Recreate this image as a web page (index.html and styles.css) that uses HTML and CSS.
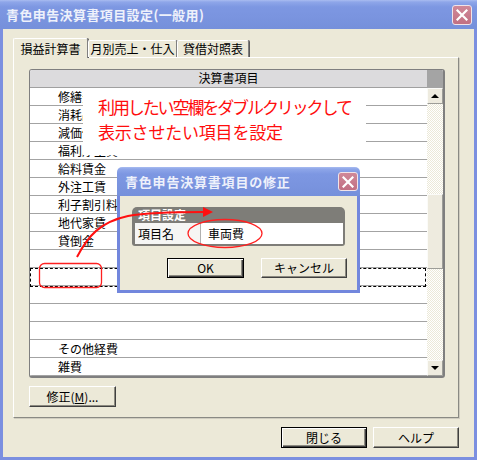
FILE: index.html
```html
<!DOCTYPE html>
<html lang="ja">
<head>
<meta charset="utf-8">
<title>青色申告決算書項目設定(一般用)</title>
<link rel="stylesheet" href="styles.css">
</head>
<body>
<div class="window">
  <div class="titlebar">
    <span class="title">青色申告決算書項目設定(一般用)</span>
    <span class="close-btn"><svg width="12" height="12" viewBox="0 0 12 12"><path d="M1.5 1.5 L10.5 10.5 M10.5 1.5 L1.5 10.5" stroke="#fff" stroke-width="2.2" stroke-linecap="square"/></svg></span>
  </div>
  <div class="client">
    <div class="tabs">
      <div class="tab active tab-pl">損益計算書</div>
      <div class="tab tab-month">月別売上・仕入</div>
      <div class="tab tab-bs">貸借対照表</div>
    </div>
    <div class="panel">
      <div class="list">
        <div class="list-main">
          <div class="list-header">決算書項目</div>
          <div class="row">修繕費</div>
          <div class="row">消耗品費</div>
          <div class="row">減価償却費</div>
          <div class="row">福利厚生費</div>
          <div class="row">給料賃金</div>
          <div class="row">外注工賃</div>
          <div class="row">利子割引料</div>
          <div class="row">地代家賃</div>
          <div class="row">貸倒金</div>
          <div class="row"></div>
          <div class="row focus"></div>
          <div class="row"></div>
          <div class="row"></div>
          <div class="row"></div>
          <div class="row">その他経費</div>
          <div class="row">雑費</div>
        </div>
        <div class="scrollbar">
          <div class="sb-corner"></div>
          <div class="sb-btn"><span class="arrow-up"></span></div>
          <div class="sb-track"><div class="sb-thumb"></div></div>
          <div class="sb-btn"><span class="arrow-down"></span></div>
        </div>
      </div>
      <button class="btn btn-edit">修正(<u>M</u>)...</button>
    </div>
    <div class="footer">
      <button class="btn btn-default btn-footer">閉じる</button>
      <button class="btn btn-footer">ヘルプ</button>
    </div>
  </div>

  <div class="note">
    <div class="note-line1">利用したい空欄をダブルクリックして</div>
    <div class="note-line2">表示させたい項目を設定</div>
  </div>

  <div class="dialog">
    <div class="dlg-titlebar">
      <span class="dlg-title">青色申告決算書項目の修正</span>
      <span class="close-btn dlg-close"><svg width="12" height="12" viewBox="0 0 12 12"><path d="M1.5 1.5 L10.5 10.5 M10.5 1.5 L1.5 10.5" stroke="#fff" stroke-width="2.2" stroke-linecap="square"/></svg></span>
    </div>
    <div class="dlg-body">
      <div class="group">
        <div class="group-title">項目設定</div>
        <div class="group-row">
          <div class="cell-label">項目名</div>
          <div class="cell-value">車両費</div>
        </div>
      </div>
      <div class="dlg-buttons">
        <button class="btn btn-default btn-ok">OK</button>
        <button class="btn btn-cancel">キャンセル</button>
      </div>
    </div>
  </div>

  <svg class="marks" width="477" height="460" viewBox="0 0 477 460">
    <path d="M77 257 C88 236 100 222 128 216 C150 212 180 212 205 212" fill="none" stroke="#ff1010" stroke-width="2"/>
    <path d="M203 207 L213 212 L203 217 Z" fill="#ff1010"/>
    <rect x="39.5" y="263.5" width="62" height="24" rx="5" fill="none" stroke="#ff2020" stroke-width="1.3"/>
    <ellipse cx="225" cy="233.5" rx="37" ry="14" fill="none" stroke="#ff2020" stroke-width="1.3"/>
  </svg>
</div>
</body>
</html>
```
FILE: styles.css
```css
* { box-sizing: border-box; }
html, body { margin: 0; padding: 0; }
body {
  width: 477px;
  height: 460px;
  overflow: hidden;
  background: #ece9d8;
  font-family: "Noto Sans CJK JP", "Noto Sans", sans-serif;
  font-size: 12px;
  color: #000;
}
.window {
  position: relative;
  width: 477px;
  height: 460px;
  display: flex;
  flex-direction: column;
}

/* title bars */
.titlebar {
  height: 29px;
  flex: none;
  display: flex;
  align-items: center;
  justify-content: space-between;
  padding: 0 5px 0 6px;
  background: linear-gradient(#a9bcf0 0, #8ea6e9 2px, #7d97e2 7px, #7a94df 60%, #7590db 100%);
}
.title {
  color: #eef1fb;
  font-size: 13px;
  font-weight: bold;
  letter-spacing: 0.4px;
  line-height: 29px;
}
.close-btn {
  width: 20px;
  height: 20px;
  display: flex;
  align-items: center;
  justify-content: center;
  background: linear-gradient(#d08898, #c17083);
  border: 1px solid #f1e3e8;
  border-radius: 3px;
}

/* client area */
.client {
  flex: 1;
  border: 3px solid #7b8fe0;
  border-top: 0;
  background: #ece9d8;
  padding-top: 9px;
  display: flex;
  flex-direction: column;
}
.tabs {
  display: flex;
  align-items: flex-end;
  height: 19px;
  padding-left: 10px;
  position: relative;
  z-index: 1;
}
.tab {
  height: 17px;
  line-height: 16px;
  text-align: center;
  background: #ece9d8;
  border-top: 1px solid #fff;
  border-left: 1px solid #fff;
  border-right: 1px solid #808080;
  border-radius: 2px 2px 0 0;
  box-shadow: 1px 0 0 #5a5a5a;
}
.tab.active {
  height: 20px;
  line-height: 19px;
  margin-bottom: -1px;
}
.tab-pl { width: 75px; }
.tab-month { width: 89px; }
.tab-bs { width: 72px; }

.panel {
  margin-left: 10px;
  width: 446px;
  height: 361px;
  border-top: 1px solid #fff;
  border-left: 1px solid #fff;
  border-right: 1px solid #8a8a84;
  border-bottom: 1px solid #8a8a84;
  box-shadow: 1px 1px 0 #d0cdc0;
  padding: 11px 0 0 15px;
}

/* list */
.list {
  width: 416px;
  height: 309px;
  display: flex;
  background: #fff;
  border: 1px solid #7f7f7f;
  border-right-width: 2px;
  border-bottom-width: 2px;
  border-radius: 3px;
  overflow: hidden;
}
.list-main {
  width: 397px;
}
.list-header {
  height: 18px;
  line-height: 16px;
  text-align: center;
  background: #dcdbdd;
  border-bottom: 1px solid #a0a0a0;
}
.row {
  position: relative;
  height: 18px;
  line-height: 17px;
  padding-left: 28px;
  border-bottom: 1px solid #a3a3a3;
  white-space: nowrap;
}
.row.focus::after {
  content: "";
  position: absolute;
  left: 0;
  right: 1px;
  top: 0;
  height: 17px;
  border: 1px dashed #000;
}

.scrollbar {
  width: 16px;
  display: flex;
  flex-direction: column;
}
.sb-corner {
  height: 18px;
  background: #a4a4a4;
}
.sb-btn {
  height: 16px;
  background: #eeebdf;
  border: 1px solid;
  border-color: #fbfbf8 #9d9d98 #9d9d98 #fbfbf8;
  display: flex;
  align-items: center;
  justify-content: center;
}
.arrow-up {
  width: 0;
  height: 0;
  border-left: 4px solid transparent;
  border-right: 4px solid transparent;
  border-bottom: 4px solid #000;
}
.arrow-down {
  width: 0;
  height: 0;
  border-left: 4px solid transparent;
  border-right: 4px solid transparent;
  border-top: 4px solid #000;
}
.sb-track {
  flex: 1;
  background: repeating-conic-gradient(#ece9d8 0 25%, #ffffff 0 50%) 0 0 / 2px 2px;
}
.sb-thumb {
  margin-top: 90px;
  height: 75px;
  background: #eeebdf;
  border: 1px solid;
  border-color: #fbfbf8 #9d9d98 #9d9d98 #fbfbf8;
}

/* buttons */
.btn {
  font-family: "Noto Sans CJK JP", "Noto Sans", sans-serif;
  font-size: 12px;
  color: #000;
  background: #ece9d8;
  height: 21px;
  padding: 0;
  line-height: 19px;
  text-align: center;
  border: 1px solid;
  border-color: #ffffff #404040 #404040 #ffffff;
  box-shadow: inset -1px -1px 0 #8c8a80;
  border-radius: 0;
}
.btn-default {
  border: 1px solid #000;
  box-shadow: inset 1px 1px 0 #fff, inset -1px -1px 0 #404040, inset -2px -2px 0 #8c8a80;
}
.btn-edit {
  display: block;
  width: 87px;
  margin-top: 8px;
}
.btn-edit u { text-decoration: underline; }

.footer {
  display: flex;
  justify-content: flex-end;
  gap: 6px;
  margin-top: 9px;
  padding-right: 15px;
}
.btn-footer { width: 86px; }

/* annotation */
.note {
  position: absolute;
  left: 83px;
  top: 88px;
  width: 283px;
  height: 67px;
  background: #fff;
  padding: 6px 0 0 15px;
  color: #ff0d0d;
  font-size: 17px;
  line-height: 25px;
  white-space: nowrap;
  z-index: 3;
}
.note-line1 { letter-spacing: -2.1px; }
.note-line2 { letter-spacing: -0.2px; }

/* dialog */
.dialog {
  position: absolute;
  left: 117px;
  top: 167px;
  width: 243px;
  height: 126px;
  display: flex;
  flex-direction: column;
  z-index: 5;
}
.dlg-titlebar {
  height: 29px;
  flex: none;
  display: flex;
  align-items: center;
  justify-content: space-between;
  padding: 0 2px 0 8px;
  border-radius: 5px 5px 0 0;
  background: linear-gradient(#a9bcf0 0, #8ea6e9 2px, #7d97e2 7px, #7a94df 60%, #7590db 100%);
}
.dlg-title {
  color: #eef1fb;
  font-size: 13px;
  font-weight: bold;
  letter-spacing: 0.8px;
  line-height: 29px;
}
.dlg-close { width: 20px; height: 19px; }
.dlg-body {
  flex: 1;
  background: #ece9d8;
  border: 3px solid #7287dd;
  border-top: 0;
  padding: 11px 0 0 12px;
}
.group {
  width: 213px;
  height: 39px;
  background: #7e7d78;
  border-radius: 5px 5px 3px 3px;
  padding: 0 2px 2px 3px;
}
.group-title {
  height: 16px;
  line-height: 16px;
  padding-left: 3px;
  color: #fff;
  font-weight: bold;
}
.group-row {
  display: flex;
  height: 21px;
}
.cell-label {
  width: 65px;
  background: #f6f6f4;
  line-height: 21px;
  padding-left: 3px;
}
.cell-value {
  flex: 1;
  background: #fff;
  border-left: 1px solid #b0b0b0;
  line-height: 21px;
  padding-left: 7px;
}
.dlg-buttons {
  display: flex;
  margin-top: 12px;
  gap: 17px;
  padding-left: 35px;
}
.btn-ok { width: 77px; height: 20px; line-height: 18px; }
.btn-cancel { width: 86px; height: 20px; line-height: 18px; }

/* red markup overlay */
.marks {
  position: absolute;
  left: 0;
  top: 0;
  z-index: 10;
  pointer-events: none;
}
```
